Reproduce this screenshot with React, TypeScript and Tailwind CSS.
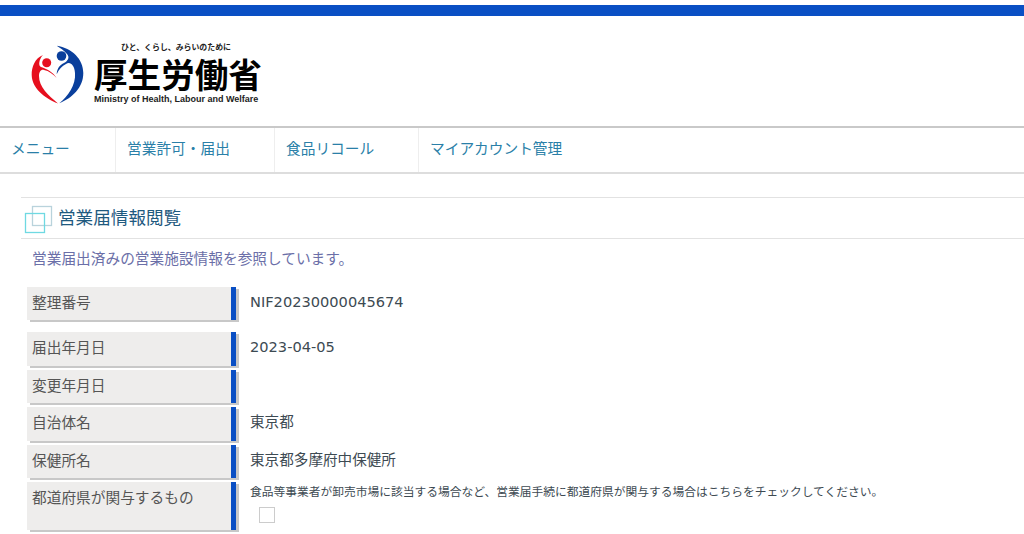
import React from 'react';

function Logo() {
  return (
    <div className="flex items-start">
      <svg width="56" height="60" viewBox="0 0 56 60" className="mt-[9px] shrink-0">
        <circle cx="16.7" cy="17.7" r="4.5" fill="#e60f1e" />
        <circle cx="31.5" cy="11" r="4.8" fill="#0a3f9c" />
        <path d="M13 10 C5 13 1.5 22 1.7 30 C2 43 14 53 28 58.5 C18 50 9 42 9 31 C9 27 11 24 14 25 C19 26 23 29 26.7 33 C23 27 17 24 11 22 C8 21 9 14 13 10 Z" fill="#e60f1e" />
        <path d="M26.7 0.7 C42 3 53.3 14 53.3 28 C53.3 43 42 53 29.3 58.3 C38 51 46 40 45 28 C44.5 20 40 16 36 19 C32 21 29 24 26.7 29.3 C27 23 30 20 34 18 C38 16 40 12 37 9 C34 5 30 3 26.7 0.7 Z" fill="#0a3f9c" />
      </svg>
      <div className="ml-[8px] mt-[5px] flex flex-col text-black">
        <div className="ml-[27px] h-[12px] text-[7.9px] leading-[12px] font-bold text-[#222] whitespace-nowrap">ひと、くらし、みらいのために</div>
        <div className="h-[40px] text-[33.6px] leading-[42px] font-bold whitespace-nowrap">厚生労働省</div>
        <div className="font-['Liberation_Sans',sans-serif] text-[9px] leading-[12px] font-bold text-[#222] whitespace-nowrap">Ministry of Health, Labour and Welfare</div>
      </div>
    </div>
  );
}

function NavItem({ label, width }: { label: string; width: string }) {
  return (
    <div className={`flex h-full items-center border-r border-[#eeeeee] pb-[3px] pl-[11px] text-[14.7px] text-[#2a7fa8] ${width}`}>
      {label}
    </div>
  );
}

function Row({ label, heightClass, mbClass, children }: { label: string; heightClass: string; mbClass: string; children?: React.ReactNode }) {
  return (
    <div className={`flex ${heightClass} ${mbClass}`}>
      <div className="flex h-full w-[209px] shrink-0 shadow-[3px_2px_0_#c8c8c8]">
        <div className="flex-1 bg-[#eeedec] pl-[5px] pt-[5px] text-[14.7px] leading-[20px] text-[#555555]">{label}</div>
        <div className="w-[5px] bg-[#0a4fc4]" />
      </div>
      <div className="ml-[14px] flex-1">{children}</div>
    </div>
  );
}

function Value({ text }: { text: string }) {
  return <div className="pt-[5px] font-['DejaVu_Sans','Noto_Sans_CJK_JP',sans-serif] text-[14.6px] leading-[20px] text-[#3d4a52]">{text}</div>;
}

export default function App() {
  return (
    <div className="h-[534px] w-[1024px] overflow-hidden bg-white font-['Noto_Sans_CJK_JP','Liberation_Sans',sans-serif]">
      <div className="mt-[5px] h-[11px] bg-[#0a4fc4]" />
      <header className="h-[110px] pl-[30px] pt-[20px]">
        <Logo />
      </header>
      <nav className="flex h-[48px] items-center border-t-2 border-b-2 border-t-[#c9c9c9] border-b-[#dddddd]">
        <NavItem label="メニュー" width="w-[116px]" />
        <NavItem label="営業許可・届出" width="w-[159px]" />
        <NavItem label="食品リコール" width="w-[144px]" />
        <div className="pb-[3px] pl-[11px] text-[14.7px] text-[#2a7fa8]">マイアカウント管理</div>
      </nav>
      <main className="pl-[21px] pt-[23px]">
        <div className="flex h-[42px] items-center border-y border-[#e2e2e2]">
          <svg width="30" height="30" viewBox="0 0 30 30" className="ml-[3px] mt-[3px] shrink-0">
            <rect x="8.5" y="1.5" width="19" height="19" fill="none" stroke="#b9d3dc" strokeWidth="1.3" />
            <rect x="1.5" y="8.5" width="19" height="19" fill="none" stroke="#6fd9e2" strokeWidth="1.3" />
          </svg>
          <h1 className="ml-[4px] pb-[2px] text-[17.6px] text-[#1f5a7f]">営業届情報閲覧</h1>
        </div>
        <p className="ml-[11px] mt-[9px] h-[39px] text-[14.7px] leading-[20px] text-[#6b6fa8]">営業届出済みの営業施設情報を参照しています。</p>
        <div className="ml-[6px]">
          <Row label="整理番号" heightClass="h-[33px]" mbClass="mb-[12px]"><Value text="NIF20230000045674" /></Row>
          <Row label="届出年月日" heightClass="h-[34px]" mbClass="mb-[4px]"><Value text="2023-04-05" /></Row>
          <Row label="変更年月日" heightClass="h-[33px]" mbClass="mb-[4px]" />
          <Row label="自治体名" heightClass="h-[34px]" mbClass="mb-[4px]"><Value text="東京都" /></Row>
          <Row label="保健所名" heightClass="h-[33px]" mbClass="mb-[4px]"><Value text="東京都多摩府中保健所" /></Row>
          <Row label="都道府県が関与するもの" heightClass="h-[48px]" mbClass="mb-0">
            <div className="pt-[1px] text-[11.75px] leading-[16px] text-[#3d4a52] whitespace-nowrap">食品等事業者が卸売市場に該当する場合など、営業届手続に都道府県が関与する場合はこちらをチェックしてください。</div>
            <div className="ml-[9px] mt-[8px] h-[16px] w-[16px] border border-[#cccccc] bg-white" />
          </Row>
        </div>
      </main>
    </div>
  );
}
